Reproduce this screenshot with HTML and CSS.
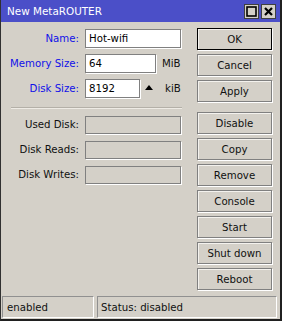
FILE: index.html
```
<!DOCTYPE html>
<html>
<head>
<meta charset="utf-8">
<link rel="stylesheet" href="styles.css">
</head>
<body>
<div class="window">
  <div class="titlebar">
    <span class="title">New MetaROUTER</span>
    <div class="tbtns">
      <span class="tbtn"><svg width="11" height="11" viewBox="0 0 11 11"><rect x="1" y="1" width="9" height="9" fill="none" stroke="#000" stroke-width="1.6"/></svg></span>
      <span class="tbtn"><svg width="11" height="11" viewBox="0 0 11 11"><path d="M2 2 L9 9 M9 2 L2 9" stroke="#000" stroke-width="2.2"/></svg></span>
    </div>
  </div>
  <div class="body">
    <div class="form">
      <div class="row"><span class="lbl req">Name:</span><span class="inp w96">Hot-wifi</span></div>
      <div class="row"><span class="lbl req">Memory Size:</span><span class="inp w70">64</span><span class="unit mib">MiB</span></div>
      <div class="row"><span class="lbl req">Disk Size:</span><span class="inp w55">8192</span><span class="tri"></span><span class="unit kib">kiB</span></div>
      <div class="sep"></div>
      <div class="row"><span class="lbl">Used Disk:</span><span class="inp dis w96"></span></div>
      <div class="row"><span class="lbl">Disk Reads:</span><span class="inp dis w96"></span></div>
      <div class="row"><span class="lbl">Disk Writes:</span><span class="inp dis w96"></span></div>
    </div>
    <div class="buttons">
      <div class="btn def">OK</div>
      <div class="btn">Cancel</div>
      <div class="btn">Apply</div>
      <div class="btn gap">Disable</div>
      <div class="btn">Copy</div>
      <div class="btn">Remove</div>
      <div class="btn">Console</div>
      <div class="btn">Start</div>
      <div class="btn">Shut down</div>
      <div class="btn">Reboot</div>
    </div>
  </div>
  <div class="status">
    <div class="panel p1">enabled</div>
    <div class="panel p2">Status: disabled</div>
  </div>
</div>
</body>
</html>
```
FILE: styles.css
```
html, body {
  margin: 0;
  padding: 0;
  background: #d4d0c8;
}
.window {
  width: 282px;
  height: 321px;
  box-sizing: border-box;
  border-left: 1px solid #303030;
  border-right: 2px solid #202020;
  border-bottom: 2px solid #202020;
  background: #d4d0c8;
  display: flex;
  flex-direction: column;
  font-family: "DejaVu Sans", sans-serif;
  font-size: 10.2px;
  color: #101010;
}
.titlebar {
  height: 22px;
  background: #4b4fc8;
  display: flex;
  align-items: center;
  padding-left: 6px;
  padding-right: 4px;
}
.title {
  color: #fff;
  flex: 1;
  font-size: 10.4px;
}
.tbtns {
  display: flex;
  gap: 2px;
}
.tbtn {
  width: 13px;
  height: 13px;
  background: #d4d0c8;
  border: 1px solid #404040;
  display: flex;
  align-items: center;
  justify-content: center;
}
.body {
  flex: 1;
  display: flex;
}
.form {
  width: 196px;
  padding-top: 7px;
}
.row {
  height: 19px;
  display: flex;
  align-items: center;
  margin-bottom: 6px;
}
.lbl {
  width: 78px;
  text-align: right;
  margin-right: 6px;
}
.lbl.req {
  color: #1010e8;
}
.inp {
  box-sizing: border-box;
  height: 19px;
  background: #fff;
  border: 1px solid #808080;
  box-shadow: 1px 1px 0 #fff;
  padding-left: 3px;
  line-height: 17px;
  color: #000;
}
.inp.dis {
  background: #d4d0c8;
  height: 18px;
}
.w96 { width: 96px; }
.w70 { width: 71px; }
.w55 { width: 55px; }
.unit { color: #101010; }
.mib { margin-left: 6px; }
.tri {
  width: 0;
  height: 0;
  border-left: 4.5px solid transparent;
  border-right: 4.5px solid transparent;
  border-bottom: 5px solid #000;
  margin-left: 5px;
  margin-bottom: 2px;
}
.kib { margin-left: 12px; }
.sep {
  height: 1px;
  margin: 9px 15px 6px 10px;
  background: #b4b0a8;
  border-bottom: 1px solid #eeebe5;
}
.buttons {
  width: 75px;
  padding-top: 6px;
  display: flex;
  flex-direction: column;
  gap: 4px;
}
.btn {
  box-sizing: border-box;
  height: 22px;
  border: 1px solid #808080;
  box-shadow: inset 1px 1px 0 #f4f2ee, 1px 1px 0 #fff;
  display: flex;
  align-items: center;
  justify-content: center;
  color: #101010;
}
.btn.def {
  border-color: #000;
}
.btn.gap {
  margin-top: 6px;
}
.status {
  display: flex;
  gap: 3px;
  padding-left: 1px;
  margin-bottom: 1px;
}
.panel {
  box-sizing: border-box;
  height: 22px;
  border: 1px solid;
  border-color: #909090 #fff #fff #909090;
  padding-left: 4px;
  display: flex;
  align-items: center;
  color: #101010;
}
.p1 { width: 92px; }
.p2 { width: 180px; padding-left: 3px; }
```
